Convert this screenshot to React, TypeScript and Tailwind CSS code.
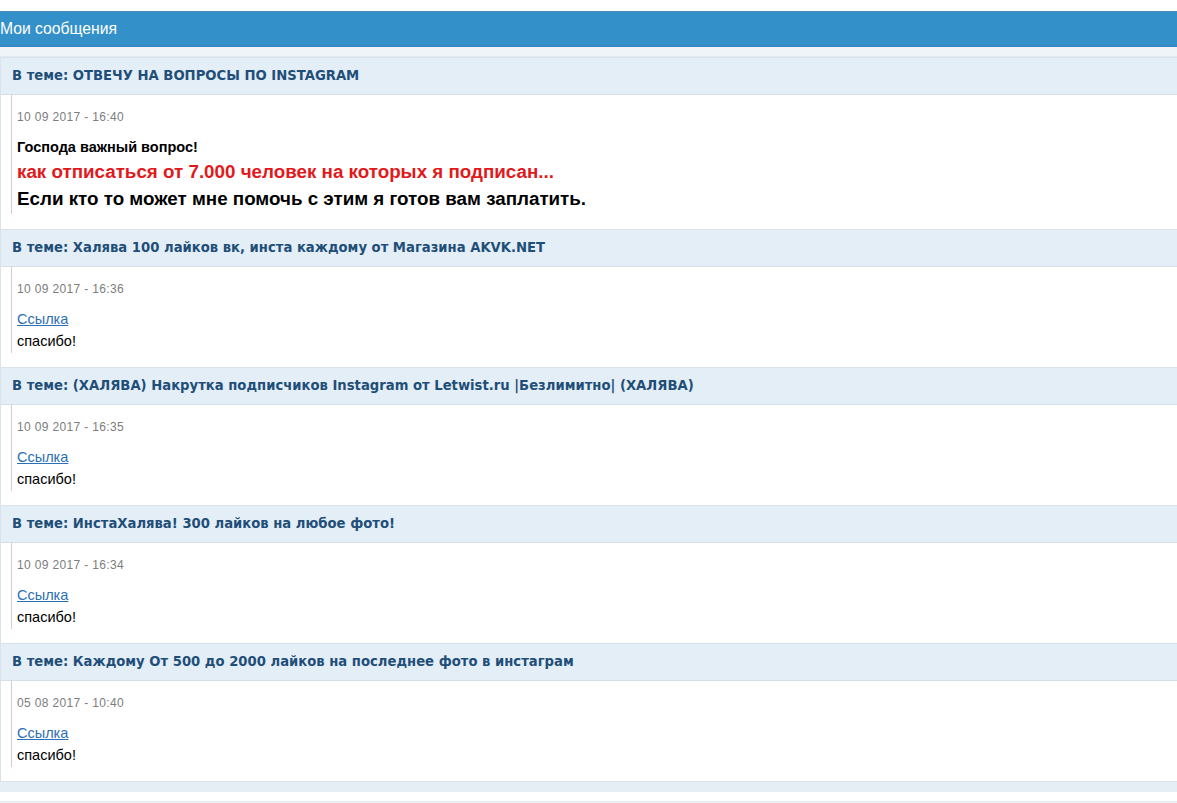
type Post = {
  topic: string;
  date: string;
  rich?: boolean;
};

const POSTS: Post[] = [
  { topic: "ОТВЕЧУ НА ВОПРОСЫ ПО INSTAGRAM", date: "10 09 2017 - 16:40", rich: true },
  { topic: "Халява 100 лайков вк, инста каждому от Магазина AKVK.NET", date: "10 09 2017 - 16:36" },
  {
    topic: "(ХАЛЯВА) Накрутка подписчиков Instagram от Letwist.ru |Безлимитно| (ХАЛЯВА)",
    date: "10 09 2017 - 16:35",
  },
  { topic: "ИнстаХалява! 300 лайков на любое фото!", date: "10 09 2017 - 16:34" },
  { topic: "Каждому От 500 до 2000 лайков на последнее фото в инстаграм", date: "05 08 2017 - 10:40" },
];

function PostCard({ post }: { post: Post }) {
  return (
    <div className="border-l border-t border-[#dbe3ea] bg-white">
      <div className="flex h-[37px] items-center border-b border-[#d6dfe8] bg-[#e4eef7] pl-[11px] font-['DejaVu_Sans',Verdana,sans-serif] text-[13.2px] font-bold text-[#1f4f79]">
        В теме: {post.topic}
      </div>
      <div className={post.rich ? "pb-[15px]" : "pb-[14px]"}>
        <div
          className={
            "ml-[10px] border-l border-[#cfcfcf] pl-[5px] pt-[16px] font-['Liberation_Sans',Arial,sans-serif] " +
            (post.rich ? "pb-[2px]" : "pb-[1px]")
          }
        >
          <div className="text-[12px] leading-[12px] tracking-[0.35px] text-[#7d7d7d]">{post.date}</div>
          {post.rich ? (
            <div className="pt-[13px] font-bold">
              <div className="text-[14.5px] leading-[22px] text-black">Господа важный вопрос!</div>
              <div className="text-[18.8px] leading-[28px] text-[#e3181b]">
                как отписаться от 7.000 человек на которых я подписан...
              </div>
              <div className="text-[18.8px] leading-[26px] text-black">
                Если кто то может мне помочь с этим я готов вам заплатить.
              </div>
            </div>
          ) : (
            <div className="pt-[13px] text-[14.5px] leading-[22px]">
              <a href="#" className="text-[#2b6fb6] underline">
                Ссылка
              </a>
              <div className="text-black">спасибо!</div>
            </div>
          )}
        </div>
      </div>
    </div>
  );
}

export default function App() {
  return (
    <div className="min-h-[803px] bg-white pt-[11px]">
      <div className="flex h-[36px] items-center border-t border-[#4b8db8] border-b-2 border-b-[#3a86c6] bg-[#3490c8] font-['Liberation_Sans',Arial,sans-serif] text-[15.7px] text-white">
        Мои сообщения
      </div>
      <div className="h-[10px] border-b border-[#e3e9ef] bg-[#eef4f8]" />
      <div className="flex flex-col">
        {POSTS.map((post) => (
          <PostCard key={post.date + post.topic} post={post} />
        ))}
      </div>
      <div className="h-[11px] border-t border-[#dce3ea] bg-[#e6eef5]" />
      <div className="h-[9px] bg-white" />
      <div className="h-[3px] border-t border-[#e3e9ef] bg-[#f3f6f9]" />
    </div>
  );
}
